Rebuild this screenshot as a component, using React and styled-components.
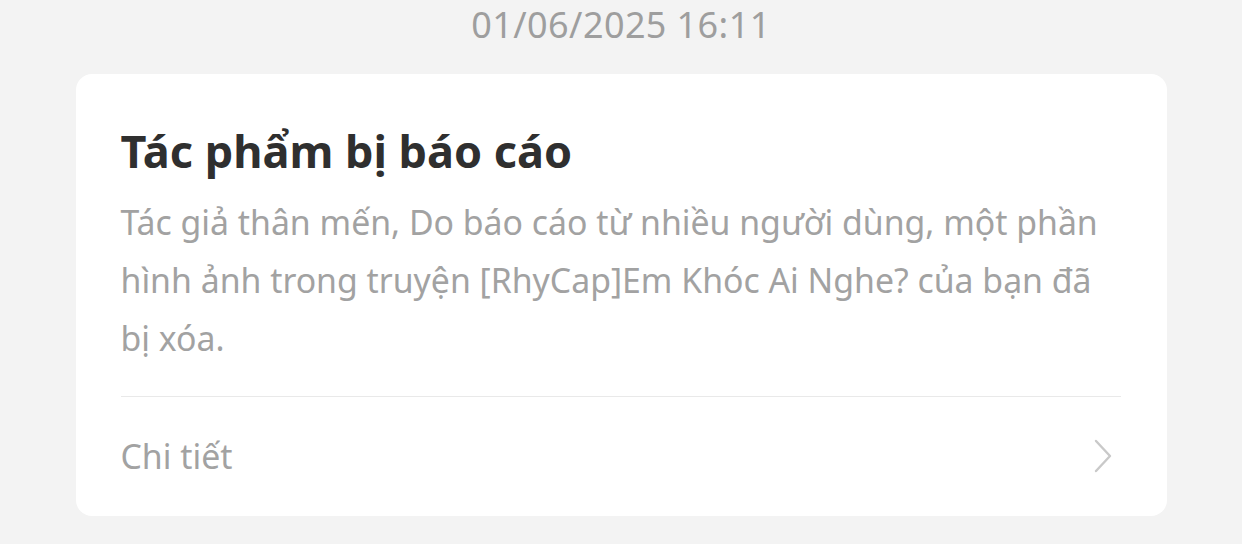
import React from "react";
import styled, { createGlobalStyle } from "styled-components";

const GlobalStyle = createGlobalStyle`
    html, body {
        margin: 0;
        padding: 0;
        background: #f3f3f3;
    }
    body {
        font-family: "Noto Sans", "Open Sans", sans-serif;
    }
`;

const Page = styled.div`
    width: 1242px;
    height: 544px;
    display: flex;
    flex-direction: column;
    align-items: center;
    overflow: hidden;
`;

const Stamp = styled.div`
    height: 74px;
    padding-top: 4px;
    box-sizing: border-box;
    font-size: 36px;
    line-height: 42px;
    letter-spacing: 0.4px;
    color: #9e9e9e;
`;

const Card = styled.div`
    width: 1091px;
    box-sizing: border-box;
    background: #fff;
    border-radius: 16px;
    padding: 49px 46px 0 45px;
`;

const Title = styled.h1`
    margin: 0;
    font-size: 45px;
    line-height: 56px;
    font-weight: 700;
    color: #2f2f2f;
`;

const Body = styled.p`
    margin: 14px 0 0;
    font-size: 33.8px;
    line-height: 58px;
    color: #a2a2a2;
    white-space: pre-line;
`;

const Divider = styled.div`
    height: 1px;
    background: #e9e9e9;
    margin-top: 29px;
`;

const DetailRow = styled.div`
    height: 119px;
    box-sizing: border-box;
    padding-bottom: 2px;
    display: flex;
    align-items: center;
    justify-content: space-between;
    font-size: 33.8px;
    color: #a2a2a2;
`;

const Chevron = styled.svg`
    width: 20px;
    height: 34px;
    margin-right: 8px;
`;

export default function App() {
    return (
        <Page>
            <GlobalStyle />
            <Stamp>01/06/2025 16:11</Stamp>
            <Card>
                <Title>Tác phẩm bị báo cáo</Title>
                <Body>
                    {"Tác giả thân mến, Do báo cáo từ nhiều người dùng, một phần\nhình ảnh trong truyện [RhyCap]Em Khóc Ai Nghe? của bạn đã\nbị xóa."}
                </Body>
                <Divider />
                <DetailRow>
                    <span>Chi tiết</span>
                    <Chevron viewBox="0 0 20 34" fill="none">
                        <path d="M3 2 L17 17 L3 32" stroke="#c9c9c9" strokeWidth="2.4" strokeLinecap="round" strokeLinejoin="round" />
                    </Chevron>
                </DetailRow>
            </Card>
        </Page>
    );
}
